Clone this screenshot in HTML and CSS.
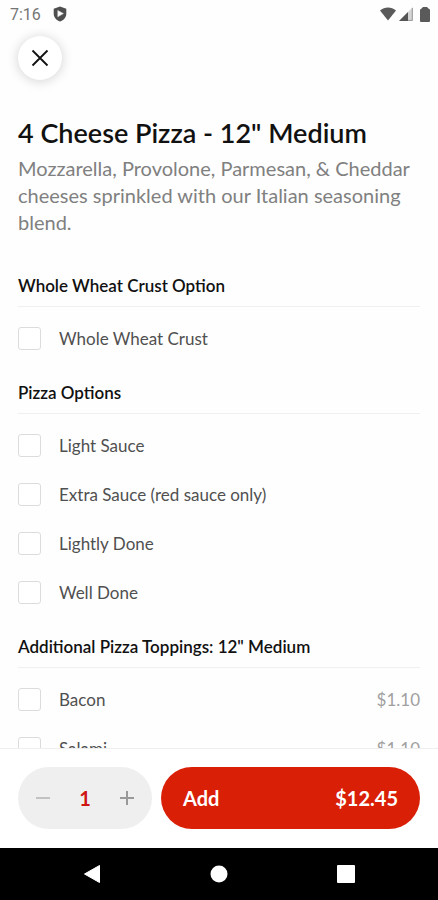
FILE: index.html
```html
<!DOCTYPE html>
<html lang="en">

<head>
  <meta charset="utf-8" />
  <meta name="viewport" content="width=device-width, initial-scale=1" />
  <title>4 Cheese Pizza - 12" Medium</title>
  <link rel="stylesheet" href="styles.css">
</head>

<body class="item_page">
  <!-- status bar -->
  <div class="status_bar">
    <span class="status_time">7:16</span>
    <svg class="status_shield" width="14" height="16" viewBox="0 0 14 16">
      <path d="M7 0.5 L13.3 2.8 V7.5 C13.3 11.3 10.8 14.2 7 15.5 C3.2 14.2 0.7 11.3 0.7 7.5 V2.8 Z" fill="#4f4f4f" />
      <path d="M4.8 4.5 L10.4 7.6 L4.8 10.7 Z" fill="#fff" stroke="#ddd" stroke-width="0.6" />
    </svg>
    <div class="status_icons">
      <svg width="16" height="14" viewBox="0 0 16 14">
        <path d="M0 3.4 C4.6 -0.6 11.4 -0.6 16 3.4 L8 13.5 Z" fill="#5a5a5a" />
      </svg>
      <svg width="14" height="14" viewBox="0 0 14 14">
        <path d="M14 0 V14 H0 Z" fill="#d5d5d5" />
        <path d="M9 5 V14 H0 Z" fill="#555" />
        <path d="M13.3 1 V13.4 H9" fill="none" stroke="#999" stroke-width="1" />
      </svg>
      <svg class="status_battery" width="10" height="15" viewBox="0 0 10 15">
        <path d="M3 0 H7 L9 2 Q10 2 10 3 V14 Q10 15 9 15 H1 Q0 15 0 14 V3 Q0 2 1 2 Z" fill="#5a5a5a" />
      </svg>
    </div>
  </div>

  <main class="item_main">
    <button class="close_btn" type="button" aria-label="Close">
      <svg width="18" height="18" viewBox="0 0 18 18">
        <path d="M1.5 1.5 L16.5 16.5 M16.5 1.5 L1.5 16.5" fill="none" stroke="#111" stroke-width="1.8" />
      </svg>
    </button>

    <h1 class="item_title">4 Cheese Pizza - 12" Medium</h1>
    <p class="item_text">Mozzarella, Provolone, Parmesan, &amp; Cheddar cheeses sprinkled with our Italian seasoning blend.</p>

    <section class="option_group">
      <h2 class="option_title">Whole Wheat Crust Option</h2>
      <div class="option_list">
        <label class="option"><input type="checkbox" name="crust"> Whole Wheat Crust</label>
      </div>
    </section>

    <section class="option_group">
      <h2 class="option_title">Pizza Options</h2>
      <div class="option_list">
        <label class="option"><input type="checkbox" name="options"> Light Sauce</label>
        <label class="option"><input type="checkbox" name="options"> Extra Sauce (red sauce only)</label>
        <label class="option"><input type="checkbox" name="options"> Lightly Done</label>
        <label class="option"><input type="checkbox" name="options"> Well Done</label>
      </div>
    </section>

    <section class="option_group">
      <h2 class="option_title">Additional Pizza Toppings: 12" Medium</h2>
      <div class="option_list">
        <label class="option"><input type="checkbox" name="toppings"> Bacon <span class="option_price">$1.10</span></label>
        <label class="option"><input type="checkbox" name="toppings"> Salami <span class="option_price">$1.10</span></label>
      </div>
    </section>
  </main>

  <!-- quantity and add -->
  <div class="order_bar">
    <div class="quantity">
      <button class="quantity_btn quantity_minus" type="button" aria-label="Decrease">
        <svg width="14" height="14" viewBox="0 0 14 14"><path d="M0 7 H14" stroke="currentColor" stroke-width="2" /></svg>
      </button>
      <span class="quantity_value">1</span>
      <button class="quantity_btn" type="button" aria-label="Increase">
        <svg width="14" height="14" viewBox="0 0 14 14"><path d="M0 7 H14 M7 0 V14" stroke="currentColor" stroke-width="2" /></svg>
      </button>
    </div>
    <button class="add_btn" type="button"><span>Add</span><span>$12.45</span></button>
  </div>

  <!-- system navigation -->
  <nav class="nav_bar">
    <button class="nav_btn" type="button" aria-label="Back">
      <svg width="18" height="20" viewBox="0 0 18 20"><path d="M16.5 1.5 V18.5 L1.5 10 Z" fill="#fff" stroke="#fff" stroke-width="1" stroke-linejoin="round" /></svg>
    </button>
    <button class="nav_btn" type="button" aria-label="Home">
      <svg width="18" height="18" viewBox="0 0 18 18"><circle cx="9" cy="9" r="8.5" fill="#fff" /></svg>
    </button>
    <button class="nav_btn" type="button" aria-label="Recent apps">
      <svg width="18" height="18" viewBox="0 0 18 18"><rect width="18" height="18" rx="1" fill="#fff" /></svg>
    </button>
  </nav>
</body>

</html>
```
FILE: styles.css
```css
* {
  box-sizing: border-box;
}

.item_page {
  display: flex;
  flex-direction: column;
  height: 100vh;
  margin: 0;
  background-color: #fefefe;
  color: #111;
  font-family: Lato, sans-serif;
}

button {
  display: flex;
  align-items: center;
  justify-content: center;
  padding: 0;
  border: 0;
  background: none;
  font-family: inherit;
  cursor: pointer;
}

.status_bar {
  display: flex;
  flex: none;
  align-items: center;
  height: 28px;
  padding: 0 8px 0 10px;
  color: #757575;
  font-family: Roboto, sans-serif;
  font-size: 16px;
}

.status_shield {
  margin-left: 12px;
}

.status_icons {
  display: flex;
  align-items: center;
  gap: 3px;
  margin-left: auto;
}

.status_battery {
  margin-left: 4px;
}

.item_main {
  flex: 1;
  min-height: 0;
  padding: 8px 18px 0;
  overflow-x: hidden;
  overflow-y: auto;
  scrollbar-width: none;
}

.close_btn {
  width: 44px;
  height: 44px;
  border-radius: 50%;
  background-color: #fff;
  box-shadow: 0 1px 12px rgba(0, 0, 0, 0.18);
}

.item_title {
  margin: 36px 0 0;
  font-size: 27px;
  font-weight: 600;
  line-height: 34px;
}

.item_text {
  margin: 5px 0 0;
  color: #808080;
  font-size: 20px;
  line-height: 27px;
}

.option_group {
  margin-top: 18px;
}

.item_text + .option_group {
  margin-top: 38px;
}

.option_title {
  margin: 0;
  padding-bottom: 8px;
  border-bottom: 1px solid #f0f0f0;
  font-size: 17px;
  font-weight: 600;
  line-height: 24px;
}

.option_list {
  padding-top: 7px;
}

.option {
  display: flex;
  align-items: center;
  height: 49px;
  color: #505050;
  font-size: 17px;
  cursor: pointer;
}

.option input {
  appearance: none;
  width: 23px;
  height: 23px;
  margin: 0 18px 0 0;
  border: 1px solid #dcdcdc;
  border-radius: 3px;
  background-color: #fff;
}

.option input:checked {
  background-color: #da1f07;
}

.option_price {
  margin-left: auto;
  color: #a0a0a0;
}

.order_bar {
  display: flex;
  flex: none;
  gap: 9px;
  padding: 18px 18px 19px;
  border-top: 1px solid #eee;
  background-color: #fff;
}

.quantity {
  display: flex;
  align-items: center;
  justify-content: space-between;
  width: 134px;
  height: 62px;
  padding: 0 8px;
  border-radius: 31px;
  background-color: #efefef;
}

.quantity_btn {
  width: 34px;
  height: 44px;
  color: #999;
}

.quantity_minus {
  color: #c2c2c2;
}

.quantity_value {
  color: #cf1414;
  font-size: 20px;
  font-weight: bold;
}

.add_btn {
  flex: 1;
  justify-content: space-between;
  height: 62px;
  padding: 0 22px;
  border-radius: 31px;
  background-color: #da1f07;
  color: #fff;
  font-size: 20px;
  font-weight: bold;
}

.nav_bar {
  display: flex;
  flex: none;
  align-items: center;
  justify-content: space-around;
  height: 52px;
  padding: 0 28px;
  background-color: #000;
}

.nav_btn {
  width: 48px;
  height: 48px;
}
```
